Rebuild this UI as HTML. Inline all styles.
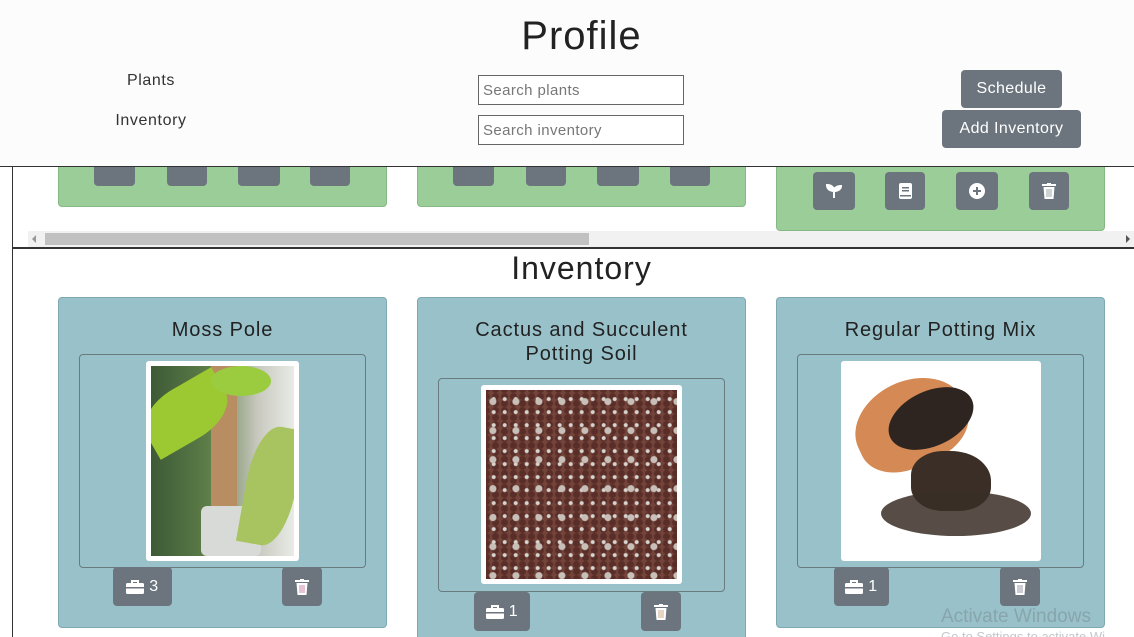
<!DOCTYPE html>
<html><head><meta charset="utf-8">
<style>
*{box-sizing:border-box;margin:0;padding:0}
html,body{width:1134px;height:637px;overflow:hidden}
body{background:#fff;font-family:"Liberation Sans",sans-serif;color:#222;position:relative}
.a{position:absolute}
.btn{position:absolute;background:#6c757d;border-radius:4px;color:#fff;display:flex;align-items:center;justify-content:center;font-size:16px;letter-spacing:0.4px}
.g{background:#9acd98;border:1px solid #86b884;border-radius:4px}
.b{background:#98c1ca;border:1px solid #7fa9b2;border-radius:4px}
.inner{position:absolute;border:1px solid #6a7b80;border-radius:4px}
.t{position:absolute;text-align:center;font-size:20px;color:#222;line-height:24px;letter-spacing:0.9px}
input{position:absolute;border:1px solid #666;font-family:"Liberation Sans",sans-serif;font-size:15px;padding:0 4px;color:#777;background:#fff;letter-spacing:0.4px}
</style></head><body>
<!-- plants section -->
<div class="a" style="left:12px;top:140px;width:1130px;height:109px;border-left:1px solid #333;border-bottom:2px solid #333"></div>
<div class="a g" style="left:58px;top:140px;width:329px;height:67px"></div>
<div class="a g" style="left:417px;top:140px;width:329px;height:67px"></div>
<div class="a g" style="left:776px;top:140px;width:329px;height:91px"></div>
<div class="btn" style="left:94px;top:148px;width:41px;height:38px"></div>
<div class="btn" style="left:167px;top:148px;width:40px;height:38px"></div>
<div class="btn" style="left:238px;top:148px;width:42px;height:38px"></div>
<div class="btn" style="left:310px;top:148px;width:40px;height:38px"></div>
<div class="btn" style="left:453px;top:148px;width:41px;height:38px"></div>
<div class="btn" style="left:526px;top:148px;width:40px;height:38px"></div>
<div class="btn" style="left:597px;top:148px;width:42px;height:38px"></div>
<div class="btn" style="left:670px;top:148px;width:40px;height:38px"></div>
<div class="btn" style="left:813px;top:172px;width:42px;height:38px"><svg width="16" height="14" viewBox="0 0 16 14"><path d="M8 14V7M8 7C8 3 5 1 1 1C1 5 4 7 8 7M8 7C8 4 11 2 15 2C15 5 12 7 8 7" fill="#fff" stroke="#fff" stroke-width="2"/></svg></div>
<div class="btn" style="left:885px;top:172px;width:40px;height:38px"><svg width="13" height="16" viewBox="0 0 13 16"><rect x="0" y="0" width="13" height="16" rx="2" fill="#fff"/><rect x="3" y="4" width="7" height="1.5" fill="#6c757d"/><rect x="3" y="7" width="7" height="1.5" fill="#6c757d"/><rect x="1" y="12" width="11" height="1.5" fill="#6c757d"/></svg></div>
<div class="btn" style="left:956px;top:172px;width:42px;height:38px"><svg width="16" height="16" viewBox="0 0 16 16"><circle cx="8" cy="8" r="8" fill="#fff"/><path d="M8 4v8M4 8h8" stroke="#6c757d" stroke-width="2"/></svg></div>
<div class="btn" style="left:1029px;top:172px;width:40px;height:38px"><svg width="14" height="16" viewBox="0 0 14 16"><rect x="0" y="1" width="14" height="2" fill="#fff"/><rect x="5" y="0" width="4" height="2" fill="#fff"/><path d="M1.5 4h11l-1 12h-9z" fill="#fff"/><path d="M5 6v8M7 6v8M9 6v8" stroke="#9aa" stroke-width="1"/></svg></div>
<div class="a" style="left:28px;top:231px;width:1106px;height:16px;background:#f1f1f1"></div>
<div class="a" style="left:45px;top:233px;width:544px;height:12px;background:#c1c1c1"></div>
<div class="a" style="left:32px;top:235px;width:0;height:0;border:4px solid transparent;border-right:4px solid #999;border-left:0"></div>
<div class="a" style="left:1126px;top:235px;width:0;height:0;border:4px solid transparent;border-left:4px solid #555;border-right:0"></div>
<!-- header -->
<div class="a" style="left:0;top:0;width:1134px;height:167px;background:#fcfcfc;border-bottom:1px solid #333"></div>
<div class="a" style="left:0;top:14px;width:1163px;text-align:center;font-size:40px;color:#222;letter-spacing:1px">Profile</div>
<div class="a" style="left:101px;top:72px;width:100px;text-align:center;font-size:16px;color:#333;letter-spacing:0.6px">Plants</div>
<div class="a" style="left:101px;top:112px;width:100px;text-align:center;font-size:16px;color:#333;letter-spacing:0.6px">Inventory</div>
<input style="left:478px;top:75px;width:206px;height:30px" value="Search plants">
<input style="left:478px;top:115px;width:206px;height:30px" value="Search inventory">
<div class="btn" style="left:961px;top:70px;width:101px;height:38px">Schedule</div>
<div class="btn" style="left:942px;top:110px;width:139px;height:38px">Add Inventory</div>
<!-- inventory -->
<div class="a" style="left:12px;top:249px;width:1130px;height:400px;border-left:1px solid #333"></div>
<div class="a" style="left:0;top:250px;width:1163px;text-align:center;font-size:32px;color:#222;letter-spacing:1px">Inventory</div>

<div class="a b" style="left:58px;top:297px;width:329px;height:331px"></div>
<div class="t" style="left:58px;top:318px;width:329px">Moss Pole</div>
<div class="inner" style="left:79px;top:354px;width:287px;height:214px"></div>
<div class="a" style="left:146px;top:361px;width:153px;height:200px;background:#fff;border-radius:3px;padding:5px">
<div style="position:relative;width:100%;height:100%;background:linear-gradient(90deg,#3d5a36 0%,#5d7d48 40%,#c9c9c0 75%,#e8ece6 100%);overflow:hidden">
<div class="a" style="left:60px;top:0;width:26px;height:150px;background:#b88d62"></div>
<div class="a" style="left:50px;top:140px;width:60px;height:50px;background:#d8dad8;border-radius:6px"></div>
<div class="a" style="left:-10px;top:20px;width:90px;height:55px;background:#9cc832;border-radius:50% 0;transform:rotate(-30deg)"></div>
<div class="a" style="left:95px;top:60px;width:50px;height:120px;background:#a8c460;border-radius:50% 0;transform:rotate(10deg)"></div>
<div class="a" style="left:60px;top:0;width:60px;height:30px;background:#9bcc40;border-radius:50%"></div>
</div></div>
<div class="btn" style="left:113px;top:567px;width:59px;height:39px"><svg width="18" height="14" viewBox="0 0 18 14"><path d="M6 3V1h6v2" stroke="#fff" stroke-width="2" fill="none"/><rect x="0" y="3" width="18" height="11" rx="1.5" fill="#fff"/><rect x="0" y="7" width="18" height="1.5" fill="#6c757d"/></svg>&nbsp;3</div>
<div class="btn" style="left:282px;top:567px;width:40px;height:39px"><svg width="14" height="16" viewBox="0 0 14 16"><rect x="0" y="1" width="14" height="2" fill="#fff"/><rect x="5" y="0" width="4" height="2" fill="#fff"/><path d="M1.5 4h11l-1 12h-9z" fill="#fff"/><path d="M5 6v8M7 6v8M9 6v8" stroke="#c8a" stroke-width="1"/></svg></div>

<div class="a b" style="left:417px;top:297px;width:329px;height:360px"></div>
<div class="t" style="left:417px;top:318px;width:329px">Cactus and Succulent<br>Potting Soil</div>
<div class="inner" style="left:438px;top:378px;width:287px;height:214px"></div>
<div class="a" style="left:481px;top:385px;width:201px;height:199px;background:#fff;border-radius:3px;padding:5px">
<div style="width:100%;height:100%;background:radial-gradient(circle at 30% 40%,#c8c0b8 0 3px,transparent 4px) 0 0/23px 29px,radial-gradient(circle at 70% 70%,#d8d4d0 0 1.5px,transparent 2.5px) 0 0/11px 13px,radial-gradient(circle at 50% 50%,#5a2e28 0 3px,transparent 4px) 5px 3px/9px 7px,#74443a"></div></div>
<div class="btn" style="left:474px;top:592px;width:56px;height:39px"><svg width="18" height="14" viewBox="0 0 18 14"><path d="M6 3V1h6v2" stroke="#fff" stroke-width="2" fill="none"/><rect x="0" y="3" width="18" height="11" rx="1.5" fill="#fff"/><rect x="0" y="7" width="18" height="1.5" fill="#6c757d"/></svg>&nbsp;1</div>
<div class="btn" style="left:641px;top:592px;width:40px;height:39px"><svg width="14" height="16" viewBox="0 0 14 16"><rect x="0" y="1" width="14" height="2" fill="#fff"/><rect x="5" y="0" width="4" height="2" fill="#fff"/><path d="M1.5 4h11l-1 12h-9z" fill="#fff"/><path d="M5 6v8M7 6v8M9 6v8" stroke="#ca8" stroke-width="1"/></svg></div>

<div class="a b" style="left:776px;top:297px;width:329px;height:331px"></div>
<div class="t" style="left:776px;top:318px;width:329px">Regular Potting Mix</div>
<div class="inner" style="left:797px;top:354px;width:287px;height:214px"></div>
<div class="a" style="left:841px;top:361px;width:200px;height:200px;background:#fff;border-radius:3px;overflow:hidden">
<div class="a" style="left:12px;top:20px;width:115px;height:85px;background:#d58a55;border-radius:50% 50% 40% 40%;transform:rotate(-25deg)"></div>
<div class="a" style="left:45px;top:30px;width:90px;height:55px;background:#2e2520;border-radius:50%;transform:rotate(-25deg)"></div>
<div class="a" style="left:70px;top:90px;width:80px;height:60px;background:#3a2e26;border-radius:40% 50% 40% 40%"></div>
<div class="a" style="left:40px;top:130px;width:150px;height:45px;background:#3a2e26;border-radius:50%;opacity:0.85"></div>
</div>
<div class="btn" style="left:834px;top:567px;width:55px;height:39px"><svg width="18" height="14" viewBox="0 0 18 14"><path d="M6 3V1h6v2" stroke="#fff" stroke-width="2" fill="none"/><rect x="0" y="3" width="18" height="11" rx="1.5" fill="#fff"/><rect x="0" y="7" width="18" height="1.5" fill="#6c757d"/></svg>&nbsp;1</div>
<div class="btn" style="left:1000px;top:567px;width:40px;height:39px"><svg width="14" height="16" viewBox="0 0 14 16"><rect x="0" y="1" width="14" height="2" fill="#fff"/><rect x="5" y="0" width="4" height="2" fill="#fff"/><path d="M1.5 4h11l-1 12h-9z" fill="#fff"/><path d="M5 6v8M7 6v8M9 6v8" stroke="#99a" stroke-width="1"/></svg></div>
<div class="a" style="left:941px;top:606px;font-size:19px;color:rgba(120,130,135,0.45)">Activate Windows</div>
<div class="a" style="left:941px;top:629px;font-size:13px;color:rgba(120,130,135,0.45);white-space:nowrap">Go to Settings to activate Wi</div>
</body></html>
